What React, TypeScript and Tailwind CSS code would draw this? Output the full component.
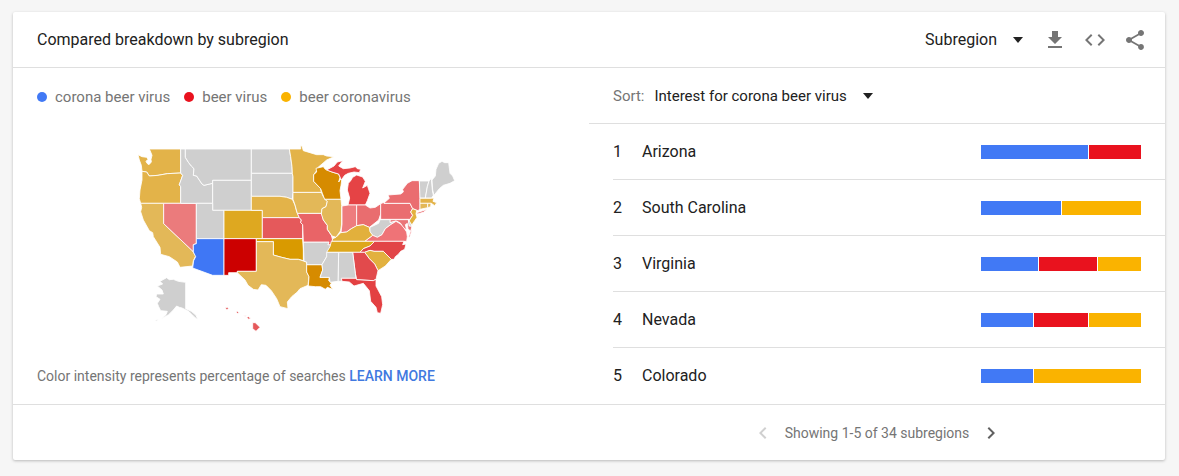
import { MdCode, MdFileDownload, MdShare, MdChevronLeft, MdChevronRight } from "react-icons/md"

const blue = "#4179f5"
const red = "#e9121e"
const yellow = "#fab300"

const terms = [
    { name: "corona beer virus", color: blue },
    { name: "beer virus", color: red },
    { name: "beer coronavirus", color: yellow },
]

const regions = [
    { name: "Arizona", values: [67, 33, 0] },
    { name: "South Carolina", values: [50, 0, 50] },
    { name: "Virginia", values: [36, 37, 27] },
    { name: "Nevada", values: [33, 34, 33] },
    { name: "Colorado", values: [33, 0, 67] },
]

const states = [
    { id: "WA", fill: "#e3b349", d: "M24 44L36 50 50 52 54 58 48 64 51 70 57 74 64 66 63 58 66 46 62 36 58 27H152V99L112 101 84 106 58 108 50 96 36 94 34 76 28 60Z" },
    { id: "OR", fill: "#e3b349", d: "M36 94L50 96 58 108 84 106 112 101 152 99 158 106 148 134 152 140V190H32L28 176 30 150 36 120Z" },
    { id: "CA", fill: "#e3b858", d: "M32 190H101V251L188 333 197 348 190 362 188 378 150 382 142 366 118 350 92 343 90 322 70 290 68 278 58 272 40 240 32 215 35 202Z" },
    { id: "NV", fill: "#eb7b7c", d: "M101 190H199V311L190 314V335L101 251Z" },
    { id: "ID", fill: "#cfcfcf", d: "M152 27H166V52L176 68 184 78 192 86 190 106 200 108 216 132 222 136 246 130 248 135V190H152V140L148 134 158 106 152 99Z" },
    { id: "MT", fill: "#cfcfcf", d: "M166 27H364V121H248V130L222 136 216 132 200 108 190 106 192 86 184 78 176 68 166 52Z" },
    { id: "WY", fill: "#cfcfcf", d: "M248 121H364V211H248Z" },
    { id: "UT", fill: "#cfcfcf", d: "M199 190H248V211H282V296H199Z" },
    { id: "CO", fill: "#dea820", d: "M282 211H397V296H282Z" },
    { id: "AZ", fill: "#3f77f5", d: "M199 296H282V406H248L188 384 191 362 197 350 190 336V314L199 311Z" },
    { id: "NM", fill: "#cc0000", d: "M282 296H379V394H322V398H296V406H282Z" },
    { id: "ND", fill: "#cfcfcf", d: "M364 27H478L482 50 486 80 487 100H364Z" },
    { id: "SD", fill: "#cfcfcf", d: "M364 100H487L489 110V158L487 178 470 172 450 169H364Z" },
    { id: "NE", fill: "#e3b349", d: "M364 169H450L470 172 487 178 495 195 500 215 508 233H397V211H364Z" },
    { id: "KS", fill: "#e5595b", d: "M397 233H508L514 240 512 248 518 254V296H397Z" },
    { id: "OK", fill: "#d99a00", d: "M379 296H518L520 330V362L505 358 480 358 455 352 430 345V305H379Z" },
    { id: "TX", fill: "#e3b858", d: "M379 305H430V345L455 352 480 358 505 358 530 366V396L537 410 534 436 510 446 502 456 485 470 472 486 474 506 450 500 440 476 424 452 408 436 394 434 384 450 370 448 354 436 345 420 322 398V394H379Z" },
    { id: "LA", fill: "#d68b00", d: "M530 374H576L578 390 570 412H598L596 422 605 428 600 436 608 448 592 442 586 448 572 440 556 440 535 438 537 410 530 396Z" },
    { id: "AR", fill: "#cfcfcf", d: "M520 306H597L594 314H603L600 330 590 350 576 374H530V366L522 364Z" },
    { id: "MO", fill: "#e96467", d: "M502 220H570L576 222 580 240 592 256V268L604 286 608 300 603 314H594L597 306H520L518 254 512 248 514 240 508 233Z" },
    { id: "IA", fill: "#e3b858", d: "M489 157H574L580 170 592 184 588 200 576 206 574 220H502L495 195 489 178Z" },
    { id: "MN", fill: "#e3b349", d: "M478 27H512L512 17 516 18 520 32 540 38 560 44 580 44 590 48 612 50 590 60 562 84 560 92 551 104V124L572 146 574 157H489V110L487 100 486 80 482 50Z" },
    { id: "WI", fill: "#d68b00", d: "M558 85L580 80 586 88 606 96 626 102 630 112 626 126 636 112 633 136 630 152 633 178H584L577 160 572 146 551 124V104L560 96Z" },
    { id: "MI", fill: "#e54345", d: "M590 90L612 78 622 66 638 62 626 78 640 86 660 84 676 80 682 86 692 88 688 98 672 96 655 100 644 106 634 120 626 102 606 96ZM654 195L659 174 652 150 655 130 662 122 668 112 680 105 698 111 706 124 698 144 712 136 720 160 712 182 706 195Z" },
    { id: "IL", fill: "#e3b858", d: "M584 178H633L635 196V252L632 272 618 292 606 288 592 268V256L580 240 574 222 576 206 588 200 592 184Z" },
    { id: "IN", fill: "#ee7c7e", d: "M636 198L655 195H680V258L664 266 650 276 633 278 636 252Z" },
    { id: "OH", fill: "#e96d6f", d: "M680 195H706L720 204 736 202 752 191V222L746 240 726 256 718 262 700 254 680 257Z" },
    { id: "PA", fill: "#ea6d70", d: "M752 191L762 187V190H840L848 206 842 216 848 226 840 238H752Z" },
    { id: "NY", fill: "#ea6d70", d: "M762 189L778 175 774 165 812 162 820 156 818 148 832 130 846 122H868L870 160V206L864 212 848 206 840 190H762ZM860 218L892 208 880 217 862 222Z" },
    { id: "VT", fill: "#cfcfcf", d: "M868 123H897L892 140 886 174H870Z" },
    { id: "NH", fill: "#cfcfcf", d: "M897 123L904 115 907 150 910 166 905 174H886L892 140Z" },
    { id: "ME", fill: "#cfcfcf", d: "M906 120L916 108 918 88 926 70 936 64 944 68 956 68 960 100 968 108 974 122 960 130 940 136 928 146 912 166 908 150Z" },
    { id: "MA", fill: "#e3b349", d: "M870 175H905L912 174 909 184 920 188 914 197 904 190H870Z" },
    { id: "CT", fill: "#e3b858", d: "M870 190H893V203L870 208Z" },
    { id: "RI", fill: "#e3b858", d: "M893 190H903L902 200 893 203Z" },
    { id: "NJ", fill: "#e3b13f", d: "M848 206L860 211 858 222 861 232 846 254 835 246 848 226 842 216Z" },
    { id: "MD", fill: "#ea7578", d: "M780 239H835L838 258 846 258 842 274 834 266 832 250 826 254 830 270 818 262 812 250 800 243 780 248Z" },
    { id: "DE", fill: "#cfcfcf", d: "M835 239L840 246 846 258H838Z" },
    { id: "WV", fill: "#cfcfcf", d: "M750 239H780V248L797 243 782 254 766 266 756 284 742 292 728 286 719 274 720 262 746 250Z" },
    { id: "VA", fill: "#ef7377", d: "M704 304L728 286 742 292 756 284 766 266 782 254 798 244 812 252 822 264 830 276 832 290 830 304ZM836 290L842 272 846 270 839 292Z" },
    { id: "KY", fill: "#e2b03c", d: "M606 304L608 296 618 292 632 278 650 276 664 266 680 257 700 254 718 262 720 275 728 286 704 304Z" },
    { id: "TN", fill: "#dda71c", d: "M604 304H734L720 318 700 326 690 337H590L600 320Z" },
    { id: "NC", fill: "#e24547", d: "M734 304H822L818 314 828 312 824 328 812 334 806 342 796 350 792 358H784L760 334H732L720 331 704 337H690L700 326 720 318Z" },
    { id: "SC", fill: "#e2b13f", d: "M704 337L720 331 732 334H760L784 358 766 378 744 392 734 372 718 356Z" },
    { id: "GA", fill: "#e24a4c", d: "M668 337H704L718 356 734 372 744 392 738 418 730 422 680 419 676 400Z" },
    { id: "AL", fill: "#cfcfcf", d: "M626 337H668L676 400 678 415H634L636 424 624 424Z" },
    { id: "MS", fill: "#cfcfcf", d: "M590 337H626L624 424 600 427 598 412H570L578 390 576 374 590 350Z" },
    { id: "FL", fill: "#e34042", d: "M634 415H678L680 419 730 422 738 418 738 438 755 470 758 494 752 520 742 518 738 502 722 484 718 452 700 430 672 438 658 426 636 424Z" },
    { id: "AK", fill: "#cfcfcf", d: "M110 413L118 419 130 418 145 424 167 427V506L184 514 198 526 204 540 190 528 176 514 156 504 148 502 140 498 130 510 116 524 94 536 108 524 112 514 92 512 86 500 82 490 90 478 78 470 80 462 100 462 96 450 82 438 98 432 90 424ZM76 541L88 537 78 544Z" },
    { id: "HI", fill: "#e5595b", d: "M286 504L292 501 296 506 290 509ZM318 517L322 514 328 519 322 520ZM340 527L350 527 346 529ZM350 532L356 530 362 535 356 538ZM368 548L376 548 390 562 378 574 368 566Z" },
]

const Caret = () => {
    return (
        <svg viewBox="0 0 10 6" className="pointer-events-none -ml-[10px] h-[6px] w-[10px] fill-[#212121]" aria-hidden="true">
            <path d="M0 0H10L5 6Z" />
        </svg>
    )
}

const Header = () => {
    return (
        <header className="flex h-14 items-center justify-between border-b border-[#dfdfdf] pl-6 pr-[18px]">
            <h1 className="text-base">Compared breakdown by subregion</h1>
            <div className="flex items-center">
                <div className="mr-5 flex items-center">
                    <select aria-label="Resolution" className="cursor-pointer appearance-none bg-transparent pr-[26px] text-base outline-none [field-sizing:content]">
                        <option>Subregion</option>
                        <option>Metro</option>
                        <option>City</option>
                    </select>
                    <Caret />
                </div>
                <div className="flex gap-4 text-[#757575]">
                    <button type="button" aria-label="Download CSV"><MdFileDownload size={24} /></button>
                    <button type="button" aria-label="Embed"><MdCode size={24} /></button>
                    <button type="button" aria-label="Share"><MdShare size={24} /></button>
                </div>
            </div>
        </header>
    )
}

const UsMap = () => {
    return (
        <svg viewBox="0 0 990 600" className="w-[330px]" role="img" aria-label="Map of the United States">
            {states.map((state) => (
                <path key={state.id} d={state.d} fill={state.fill} stroke="#fff" strokeWidth="2.5" strokeLinejoin="round" />
            ))}
        </svg>
    )
}

const MapPanel = () => {
    return (
        <section className="flex w-1/2 flex-col px-6">
            <ul className="flex gap-[14px] pt-[19px] text-[#757575]">
                {terms.map((term) => (
                    <li key={term.name} className="flex items-center gap-2 text-[15px] leading-5">
                        <span className="size-[10px] rounded-full" style={{ backgroundColor: term.color }} />
                        {term.name}
                    </li>
                ))}
            </ul>
            <div className="flex justify-center pr-3 pt-[33px]">
                <UsMap />
            </div>
            <p className="mt-auto pb-[18px] text-[14px] leading-5 text-[#757575]">
                Color intensity represents percentage of searches{" "}
                <a href="#" className="font-medium text-[#4179e0]">LEARN MORE</a>
            </p>
        </section>
    )
}

const RegionList = () => {
    return (
        <section className="w-1/2">
            <div className="flex h-14 items-center border-b border-[#dfdfdf] pl-6 pt-px">
                <label htmlFor="sort" className="mr-[10px] text-[15px] text-[#757575]">Sort:</label>
                <select id="sort" className="cursor-pointer appearance-none bg-transparent pr-[26px] text-[15px] outline-none [field-sizing:content]">
                    {terms.map((term) => (
                        <option key={term.name}>Interest for {term.name}</option>
                    ))}
                </select>
                <Caret />
            </div>
            <ol className="ml-6">
                {regions.map((region, i) => (
                    <li key={region.name} className="flex h-14 items-center border-b border-[#dfdfdf] pr-6 last:border-b-0">
                        <span className="w-[29px]">{i + 1}</span>
                        <span className="flex-1">{region.name}</span>
                        <div className="flex h-[14px] w-40 gap-px">
                            {region.values.map((value, j) => value > 0 && (
                                <div key={terms[j].name} style={{ flex: value, backgroundColor: terms[j].color }} />
                            ))}
                        </div>
                    </li>
                ))}
            </ol>
        </section>
    )
}

const Pagination = () => {
    return (
        <footer className="flex h-14 justify-end border-t border-[#dfdfdf] pt-px">
            <nav className="flex w-1/2 items-center justify-center gap-[10px] text-[#757575]">
                <button type="button" aria-label="Previous" disabled className="text-[#d0d0d0]"><MdChevronLeft size={24} /></button>
                <span className="text-[14px]">Showing 1-5 of 34 subregions</span>
                <button type="button" aria-label="Next" className="text-[#616161]"><MdChevronRight size={24} /></button>
            </nav>
        </footer>
    )
}

export default function App() {
    return (
        <main className="min-h-screen bg-[#f6f6f6] py-3 pl-[13px] pr-[14px] font-[Roboto,sans-serif] text-base text-[#212121]">
            <div className="rounded-xs bg-white shadow-[0_1px_3px_rgba(0,0,0,0.25)]">
                <Header />
                <div className="flex">
                    <MapPanel />
                    <RegionList />
                </div>
                <Pagination />
            </div>
        </main>
    )
}
